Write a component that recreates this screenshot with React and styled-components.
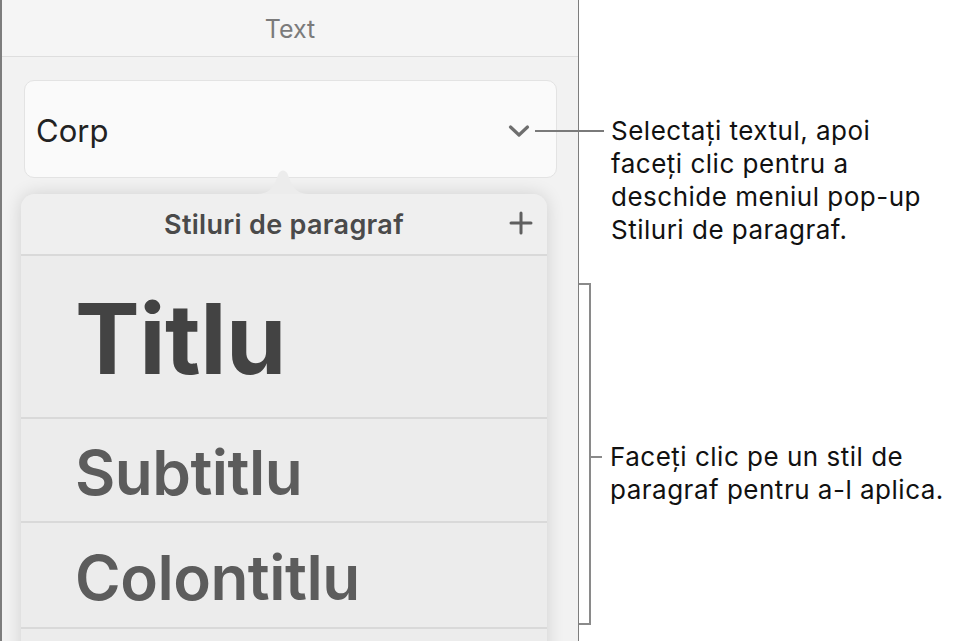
import React from 'react';
import styled, { createGlobalStyle } from 'styled-components';

const GlobalStyle = createGlobalStyle`
  body {
    margin: 0;
    background: #ffffff;
    font-family: 'Inter', 'Noto Sans', sans-serif;
    overflow: hidden;
  }
`;

const styles = [
  { name: 'Titlu', size: 97, weight: 700, color: '#434343', height: 163 },
  { name: 'Subtitlu', size: 62, weight: 600, color: '#5c5c5c', height: 104 },
  { name: 'Colontitlu', size: 62, weight: 600, color: '#5c5c5c', height: 106 },
  { name: '', size: 62, weight: 600, color: '#5c5c5c', height: 80 },
];

export default function App() {
  return (
    <Page>
      <GlobalStyle />
      <Panel>
        <Header>Text</Header>
        <StyleButton>
          <span>Corp</span>
          <Chevron />
        </StyleButton>
        <Popover>
          <Arrow />
          <PopoverHeader>
            Stiluri de paragraf
            <PlusIcon />
          </PopoverHeader>
          {styles.map((s, i) => (
            <StyleRow key={i} $height={s.height}>
              <StyleName $size={s.size} $weight={s.weight} $color={s.color}>
                {s.name}
              </StyleName>
            </StyleRow>
          ))}
        </Popover>
      </Panel>
      <Notes>
        <Callout>
          <Leader />
          <NoteText>
            Selectați textul, apoi
            <br />
            faceți clic pentru a
            <br />
            deschide meniul pop-up
            <br />
            Stiluri de paragraf.
          </NoteText>
        </Callout>
        <BracketCallout>
          <Bracket />
          <NoteText $offset={157}>
            Faceți clic pe un stil de
            <br />
            paragraf pentru a-l aplica.
          </NoteText>
        </BracketCallout>
      </Notes>
    </Page>
  );
}

function Chevron() {
  return (
    <svg width="22" height="14" viewBox="0 0 22 14">
      <polyline
        points="2.5,3 11,11 19.5,3"
        fill="none"
        stroke="#6e6e6e"
        strokeWidth="3.2"
        strokeLinecap="round"
        strokeLinejoin="round"
      />
    </svg>
  );
}

function PlusIcon() {
  return (
    <PlusWrap>
      <svg width="24" height="24" viewBox="0 0 24 24">
        <path d="M12 2 V22 M2 12 H22" stroke="#5f5f5f" strokeWidth="3" strokeLinecap="round" />
      </svg>
    </PlusWrap>
  );
}

function Arrow() {
  return (
    <ArrowWrap>
      <svg width="56" height="28" viewBox="0 0 56 28">
        <path
          d="M0 27 C14 27 18 22 23 8 C25 2 31 2 33 8 C38 22 42 27 56 27 Z"
          fill="#ececec"
        />
      </svg>
    </ArrowWrap>
  );
}

function Bracket() {
  return (
    <svg width="24" height="342" viewBox="0 0 24 342">
      <path d="M0 1 H11 V341 H0 M11 174 H23" fill="none" stroke="#8a8a8a" strokeWidth="2" />
    </svg>
  );
}

const Page = styled.div`
  display: flex;
  align-items: flex-start;
  height: 641px;
  width: 959px;
`;

const Panel = styled.div`
  box-sizing: border-box;
  width: 579px;
  height: 641px;
  flex-shrink: 0;
  border-left: 2px solid #7d7d7d;
  border-right: 1px solid #7d7d7d;
  background: #f2f2f2;
  display: flex;
  flex-direction: column;
  overflow: hidden;
`;

const Header = styled.div`
  height: 57px;
  flex-shrink: 0;
  border-bottom: 1px solid #dedede;
  background: #f5f5f5;
  display: flex;
  align-items: center;
  justify-content: center;
  padding-top: 2px;
  box-sizing: border-box;
  font-size: 25px;
  color: #7b7b7b;
`;

const StyleButton = styled.div`
  box-sizing: border-box;
  margin: 23px 21px 0 22px;
  height: 98px;
  flex-shrink: 0;
  background: #fafafa;
  border: 1px solid #e3e3e3;
  border-radius: 10px;
  display: flex;
  align-items: center;
  justify-content: space-between;
  padding: 3px 26px 0 11px;
  font-size: 31px;
  color: #222222;
`;

const Popover = styled.div`
  position: relative;
  margin: 16px 0 0 19px;
  width: 526px;
  flex-shrink: 0;
  background: #ececec;
  border-radius: 14px 14px 0 0;
  box-shadow: 0 0 18px rgba(0, 0, 0, 0.14);
`;

const ArrowWrap = styled.div`
  position: absolute;
  top: -27px;
  left: 234px;
  line-height: 0;
`;

const PopoverHeader = styled.div`
  position: relative;
  height: 60px;
  display: flex;
  align-items: center;
  justify-content: center;
  background: #efefef;
  border-radius: 14px 14px 0 0;
  font-size: 27px;
  font-weight: 600;
  letter-spacing: 0.3px;
  color: #4a4a4a;
`;

const PlusWrap = styled.div`
  position: absolute;
  right: 14px;
  top: 17px;
  line-height: 0;
`;

const StyleRow = styled.div`
  box-sizing: border-box;
  height: ${(p) => p.$height}px;
  border-top: 2px solid #d9d9d9;
  display: flex;
  align-items: center;
  padding: 4px 0 0 54px;
`;

const StyleName = styled.div`
  font-size: ${(p) => p.$size}px;
  font-weight: ${(p) => p.$weight};
  color: ${(p) => p.$color};
  letter-spacing: -0.5px;
`;

const Notes = styled.div`
  position: relative;
  z-index: 1;
  display: flex;
  flex-direction: column;
  flex: 1;
`;

const Callout = styled.div`
  display: flex;
  align-items: flex-start;
  margin: 114px 0 0 -44px;
`;

const Leader = styled.div`
  width: 69px;
  height: 2px;
  margin: 16px 7px 0 0;
  background: #7a7a7a;
  flex-shrink: 0;
`;

const BracketCallout = styled.div`
  display: flex;
  align-items: flex-start;
  margin-top: 37px;
`;

const NoteText = styled.div`
  font-size: 26px;
  line-height: 33px;
  letter-spacing: 0.5px;
  color: #111111;
  margin-top: ${(p) => p.$offset || 0}px;
  margin-left: ${(p) => (p.$offset ? 7 : 0)}px;
  white-space: nowrap;
`;
